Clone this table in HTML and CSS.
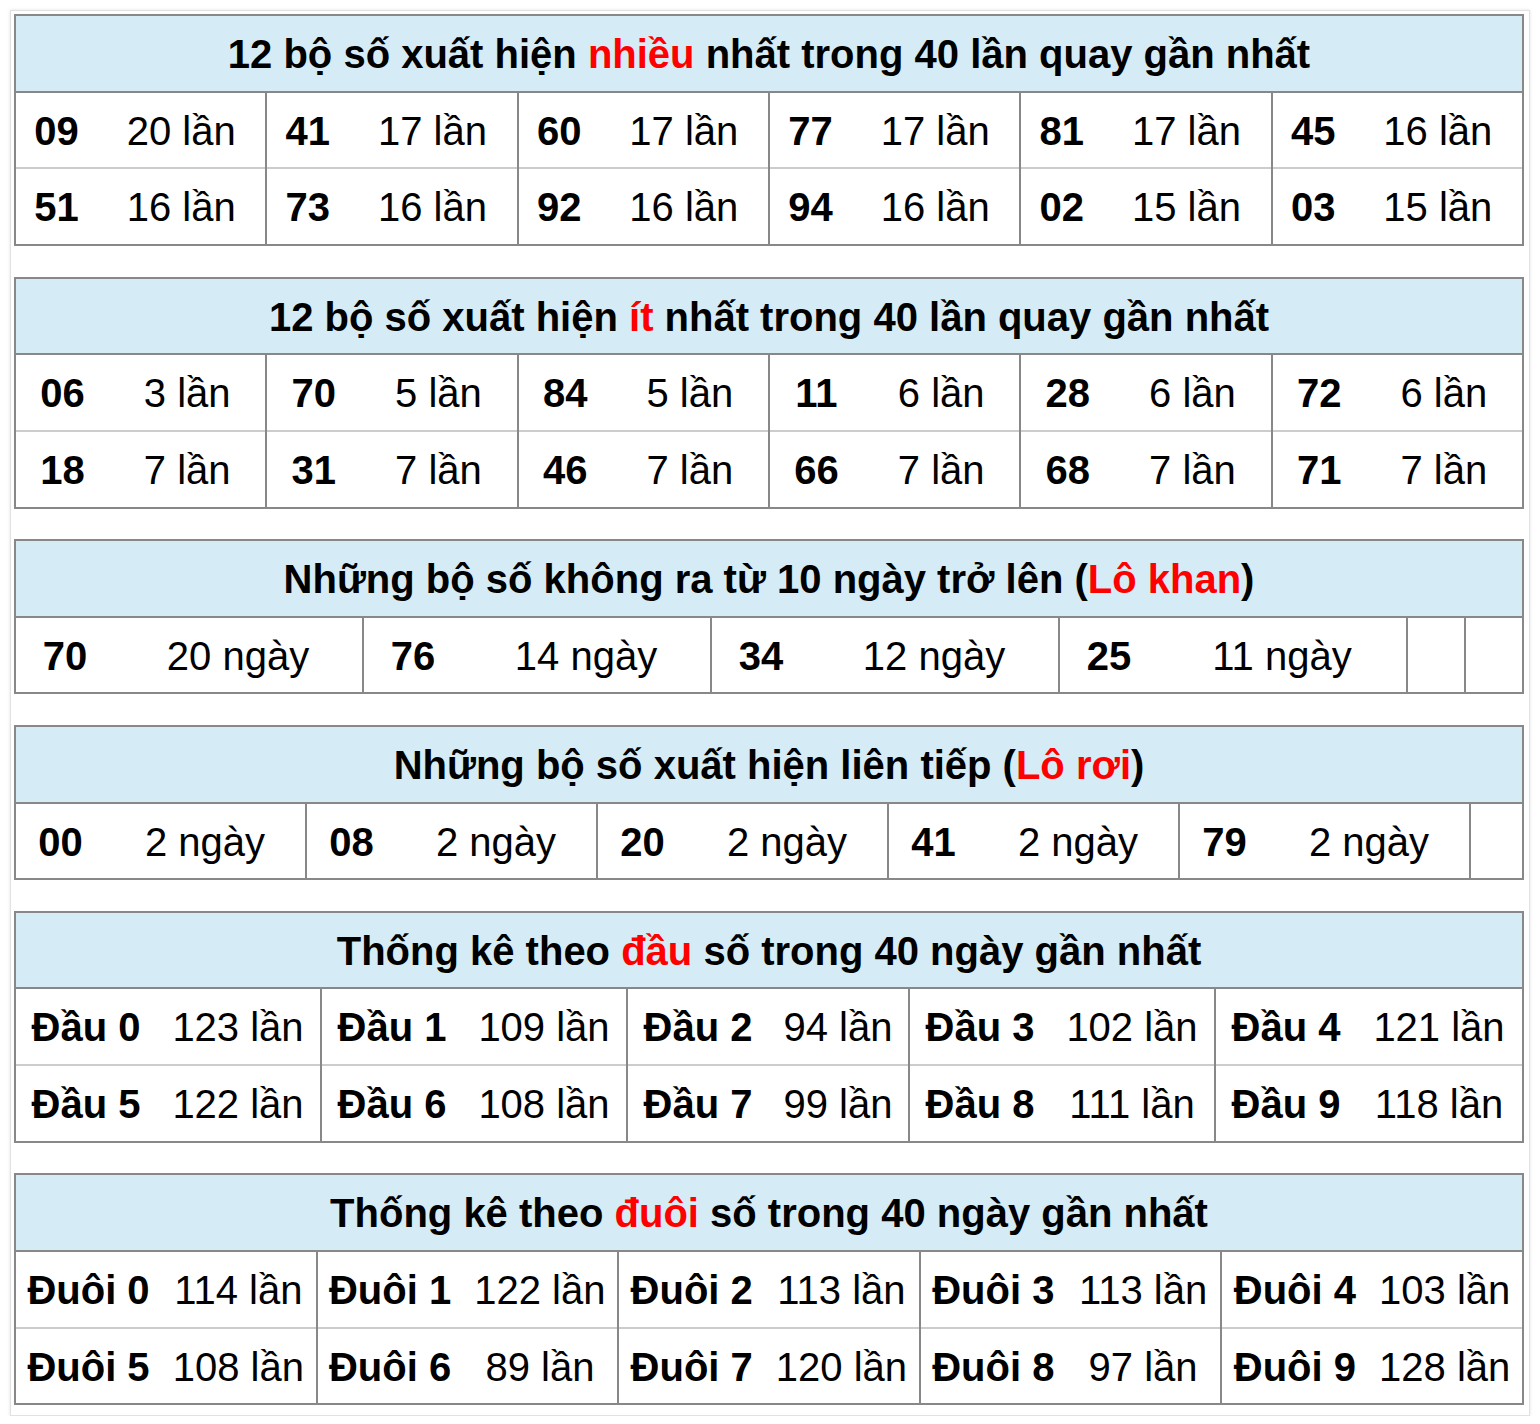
FILE: index.html
```html
<!DOCTYPE html>
<html lang="vi">
<head>
<meta charset="utf-8">
<title>Thống kê lô tô</title>
<link rel="stylesheet" href="styles.css">
</head>
<body>
<div class="wrap">

<table class="stat t1">
<colgroup>
<col class="n"><col><col class="n"><col><col class="n"><col><col class="n"><col><col class="n"><col><col class="n"><col>
</colgroup>
<tr><th colspan="12">12 bộ số xuất hiện <span class="hl">nhiều</span> nhất trong 40 lần quay gần nhất</th></tr>
<tr>
<td class="n">09</td><td class="c">20 lần</td>
<td class="n">41</td><td class="c">17 lần</td>
<td class="n">60</td><td class="c">17 lần</td>
<td class="n">77</td><td class="c">17 lần</td>
<td class="n">81</td><td class="c">17 lần</td>
<td class="n">45</td><td class="c">16 lần</td>
</tr>
<tr class="next">
<td class="n">51</td><td class="c">16 lần</td>
<td class="n">73</td><td class="c">16 lần</td>
<td class="n">92</td><td class="c">16 lần</td>
<td class="n">94</td><td class="c">16 lần</td>
<td class="n">02</td><td class="c">15 lần</td>
<td class="n">03</td><td class="c">15 lần</td>
</tr>
</table>

<table class="stat t2">
<colgroup>
<col class="n"><col><col class="n"><col><col class="n"><col><col class="n"><col><col class="n"><col><col class="n"><col>
</colgroup>
<tr><th colspan="12">12 bộ số xuất hiện <span class="hl">ít</span> nhất trong 40 lần quay gần nhất</th></tr>
<tr>
<td class="n">06</td><td class="c">3 lần</td>
<td class="n">70</td><td class="c">5 lần</td>
<td class="n">84</td><td class="c">5 lần</td>
<td class="n">11</td><td class="c">6 lần</td>
<td class="n">28</td><td class="c">6 lần</td>
<td class="n">72</td><td class="c">6 lần</td>
</tr>
<tr class="next">
<td class="n">18</td><td class="c">7 lần</td>
<td class="n">31</td><td class="c">7 lần</td>
<td class="n">46</td><td class="c">7 lần</td>
<td class="n">66</td><td class="c">7 lần</td>
<td class="n">68</td><td class="c">7 lần</td>
<td class="n">71</td><td class="c">7 lần</td>
</tr>
</table>

<table class="stat t3">
<colgroup>
<col class="n"><col class="c"><col class="n"><col class="c"><col class="n"><col class="c"><col class="n"><col class="c"><col><col><col><col>
</colgroup>
<tr><th colspan="12">Những bộ số không ra từ 10 ngày trở lên (<span class="hl">Lô khan</span>)</th></tr>
<tr>
<td class="n">70</td><td class="c">20 ngày</td>
<td class="n">76</td><td class="c">14 ngày</td>
<td class="n">34</td><td class="c">12 ngày</td>
<td class="n">25</td><td class="c">11 ngày</td>
<td class="n"></td><td class="c"></td>
<td class="n"></td><td class="c"></td>
</tr>
</table>

<table class="stat t4">
<colgroup>
<col class="n"><col class="c"><col class="n"><col class="c"><col class="n"><col class="c"><col class="n"><col class="c"><col class="n"><col class="c"><col><col>
</colgroup>
<tr><th colspan="12">Những bộ số xuất hiện liên tiếp (<span class="hl">Lô rơi</span>)</th></tr>
<tr>
<td class="n">00</td><td class="c">2 ngày</td>
<td class="n">08</td><td class="c">2 ngày</td>
<td class="n">20</td><td class="c">2 ngày</td>
<td class="n">41</td><td class="c">2 ngày</td>
<td class="n">79</td><td class="c">2 ngày</td>
<td class="n"></td><td class="c"></td>
</tr>
</table>

<table class="stat t5">
<colgroup>
<col class="n"><col class="c"><col class="n"><col class="c"><col class="n"><col class="cs"><col class="n"><col class="c"><col class="n"><col>
</colgroup>
<tr><th colspan="10">Thống kê theo <span class="hl">đầu</span> số trong 40 ngày gần nhất</th></tr>
<tr>
<td class="n">Đầu 0</td><td class="c">123 lần</td>
<td class="n">Đầu 1</td><td class="c">109 lần</td>
<td class="n">Đầu 2</td><td class="c">94 lần</td>
<td class="n">Đầu 3</td><td class="c">102 lần</td>
<td class="n">Đầu 4</td><td class="c">121 lần</td>
</tr>
<tr class="next">
<td class="n">Đầu 5</td><td class="c">122 lần</td>
<td class="n">Đầu 6</td><td class="c">108 lần</td>
<td class="n">Đầu 7</td><td class="c">99 lần</td>
<td class="n">Đầu 8</td><td class="c">111 lần</td>
<td class="n">Đầu 9</td><td class="c">118 lần</td>
</tr>
</table>

<table class="stat t6">
<colgroup>
<col class="n"><col><col class="n"><col><col class="n"><col><col class="n"><col><col class="n"><col>
</colgroup>
<tr><th colspan="10">Thống kê theo <span class="hl">đuôi</span> số trong 40 ngày gần nhất</th></tr>
<tr>
<td class="n">Đuôi 0</td><td class="c">114 lần</td>
<td class="n">Đuôi 1</td><td class="c">122 lần</td>
<td class="n">Đuôi 2</td><td class="c">113 lần</td>
<td class="n">Đuôi 3</td><td class="c">113 lần</td>
<td class="n">Đuôi 4</td><td class="c">103 lần</td>
</tr>
<tr class="next">
<td class="n">Đuôi 5</td><td class="c">108 lần</td>
<td class="n">Đuôi 6</td><td class="c">89 lần</td>
<td class="n">Đuôi 7</td><td class="c">120 lần</td>
<td class="n">Đuôi 8</td><td class="c">97 lần</td>
<td class="n">Đuôi 9</td><td class="c">128 lần</td>
</tr>
</table>

</div>
</body>
</html>
```

FILE: styles.css
```css
html, body {
  margin: 0;
  padding: 0;
  background: #ffffff;
}

.wrap {
  margin: 10px 0 0 10px;
  width: 1510px;
  padding: 3px 5px 10px 3px;
  border: 1px solid #e2e2e2;
  box-shadow: 0 0 3px rgba(0, 0, 0, 0.12);
  font-family: "Liberation Sans", Arial, Helvetica, sans-serif;
  color: #000;
}

.stat {
  width: 1510px;
  table-layout: fixed;
  border-collapse: collapse;
  border: 2px solid #888888;
  margin-bottom: 30.5px;
  font-size: 40px;
}

.stat:last-child {
  margin-bottom: 0;
}

.stat th {
  background: #d5ecf6;
  font-weight: bold;
  text-align: center;
  padding: 15px 0 13px;
  line-height: 46.67px;
  border: 2px solid #888888;
  white-space: nowrap;
}

.stat td {
  padding: 15px 0 13px;
  line-height: 46.67px;
  text-align: center;
  white-space: nowrap;
  overflow: hidden;
}

.stat td.n {
  font-weight: bold;
  border-left: 2px solid #888888;
}

.stat td.c {
  font-weight: normal;
  border-right: 2px solid #888888;
}

.stat tr.next td {
  border-top: 2px solid #cccccc;
}

.hl {
  color: #ff0000;
}

/* column widths */
.t1 col.n { width: 82px; }
.t2 col.n { width: 94px; }
.t3 col.n { width: 99px; }
.t3 col.c { width: 249px; }
.t4 col.n { width: 90px; }
.t4 col.c { width: 201px; }
.t5 col.n { width: 141px; }
.t5 col.c { width: 165px; }
.t5 col.cs { width: 141px; }
.t6 col.n { width: 146px; }
```
